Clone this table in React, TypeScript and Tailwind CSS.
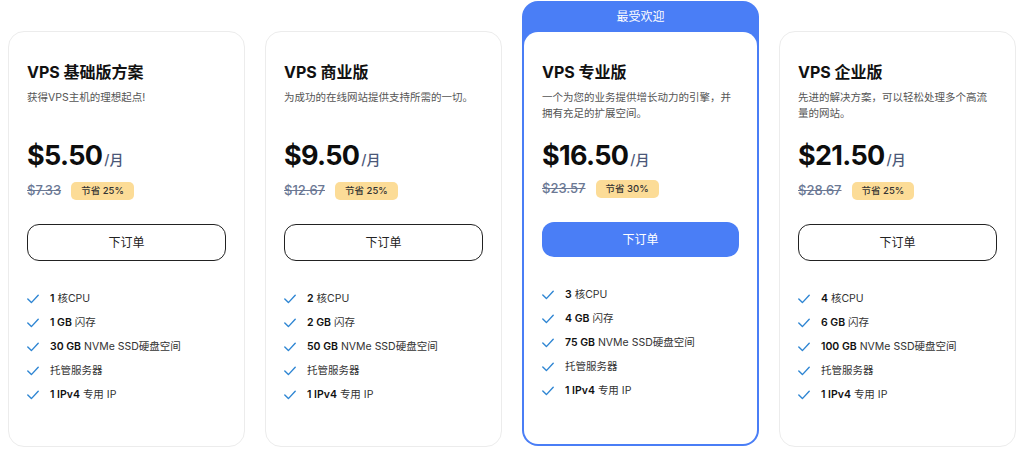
import React from "react";

type Feature = { b?: string; t: string };
type Plan = {
  name: string;
  desc: string;
  price: string;
  old: string;
  save: string;
  features: Feature[];
  featured?: boolean;
};

const plans: Plan[] = [
  {
    name: "VPS 基础版方案",
    desc: "获得VPS主机的理想起点!",
    price: "$5.50",
    old: "$7.33",
    save: "节省 25%",
    features: [
      { b: "1", t: " 核CPU" },
      { b: "1 GB", t: " 闪存" },
      { b: "30 GB", t: " NVMe SSD硬盘空间" },
      { t: "托管服务器" },
      { b: "1 IPv4", t: " 专用 IP" },
    ],
  },
  {
    name: "VPS 商业版",
    desc: "为成功的在线网站提供支持所需的一切。",
    price: "$9.50",
    old: "$12.67",
    save: "节省 25%",
    features: [
      { b: "2", t: " 核CPU" },
      { b: "2 GB", t: " 闪存" },
      { b: "50 GB", t: " NVMe SSD硬盘空间" },
      { t: "托管服务器" },
      { b: "1 IPv4", t: " 专用 IP" },
    ],
  },
  {
    name: "VPS 专业版",
    desc: "一个为您的业务提供增长动力的引擎，并拥有充足的扩展空间。",
    price: "$16.50",
    old: "$23.57",
    save: "节省 30%",
    featured: true,
    features: [
      { b: "3", t: " 核CPU" },
      { b: "4 GB", t: " 闪存" },
      { b: "75 GB", t: " NVMe SSD硬盘空间" },
      { t: "托管服务器" },
      { b: "1 IPv4", t: " 专用 IP" },
    ],
  },
  {
    name: "VPS 企业版",
    desc: "先进的解决方案，可以轻松处理多个高流量的网站。",
    price: "$21.50",
    old: "$28.67",
    save: "节省 25%",
    features: [
      { b: "4", t: " 核CPU" },
      { b: "6 GB", t: " 闪存" },
      { b: "100 GB", t: " NVMe SSD硬盘空间" },
      { t: "托管服务器" },
      { b: "1 IPv4", t: " 专用 IP" },
    ],
  },
];

const Check = () => (
  <svg width="12" height="10" viewBox="0 0 12 10" fill="none" className="shrink-0">
    <polyline
      points="0.8,5 4.4,8.6 11.2,1.2"
      stroke="#2f86d3"
      strokeWidth="1.4"
      strokeLinecap="round"
      strokeLinejoin="round"
    />
  </svg>
);

function Body({ p }: { p: Plan }) {
  return (
    <div className="flex flex-col px-[18px] pt-7">
      <div className="text-[16px] leading-6 font-bold text-[#111]">{p.name}</div>
      <div className="mt-1.5 min-h-[32px] text-[10.5px] leading-4 text-[#555]">{p.desc}</div>
      <div className="mt-4 flex items-end h-9">
        <span className="text-[27px] leading-9 font-bold text-[#0d0d0d] tracking-tight">{p.price}</span>
        <span className="text-[14px] leading-6 font-medium text-[#4b5878] ml-0.5 mb-0.5">/月</span>
      </div>
      <div className={`${p.featured ? "mt-1.5" : "mt-2"} flex items-center h-[18px] gap-2.5`}>
        <span className="text-[13px] font-medium text-[#6b7894] line-through">{p.old}</span>
        <span className="bg-[#fcdc97] text-[#333] text-[9.5px] font-medium rounded-[5px] px-2.5 h-[18px] flex items-center">
          {p.save}
        </span>
      </div>
      {p.featured ? (
        <button className="mt-6 h-[35px] w-full rounded-[12px] bg-[#4a7ef6] text-white text-[12px]">
          下订单
        </button>
      ) : (
        <button className="mt-6 h-[37px] w-full rounded-[12px] border border-[#222] bg-white text-[#222] text-[12px]">
          下订单
        </button>
      )}
      <ul className="mt-[26px] flex flex-col">
        {p.features.map((f, i) => (
          <li key={i} className="flex items-center h-6 gap-[11px] text-[10.5px] text-[#333]">
            <Check />
            <span>
              {f.b && <span className="font-semibold text-[#111]">{f.b}</span>}
              {f.t}
            </span>
          </li>
        ))}
      </ul>
    </div>
  );
}

export default function App() {
  return (
    <div
      className="w-[1024px] h-[449px] bg-white overflow-hidden"
      style={{ fontFamily: '"Inter", "Noto Sans CJK SC", sans-serif' }}
    >
      <div className="grid grid-cols-4 gap-5 px-2 pt-px items-start">
        {plans.map((p, i) =>
          p.featured ? (
            <div key={i} className="h-[445px] rounded-[16px] bg-[#4a7ef6] px-[2px] pb-[2px] flex flex-col">
              <div className="h-[31px] flex items-center justify-center text-white text-[12px]">最受欢迎</div>
              <div className="flex-1 bg-white rounded-[14px]">
                <Body p={p} />
              </div>
            </div>
          ) : (
            <div key={i} className="mt-[30px] h-[416px] rounded-[16px] border border-[#ececec] bg-white">
              <Body p={p} />
            </div>
          )
        )}
      </div>
    </div>
  );
}
